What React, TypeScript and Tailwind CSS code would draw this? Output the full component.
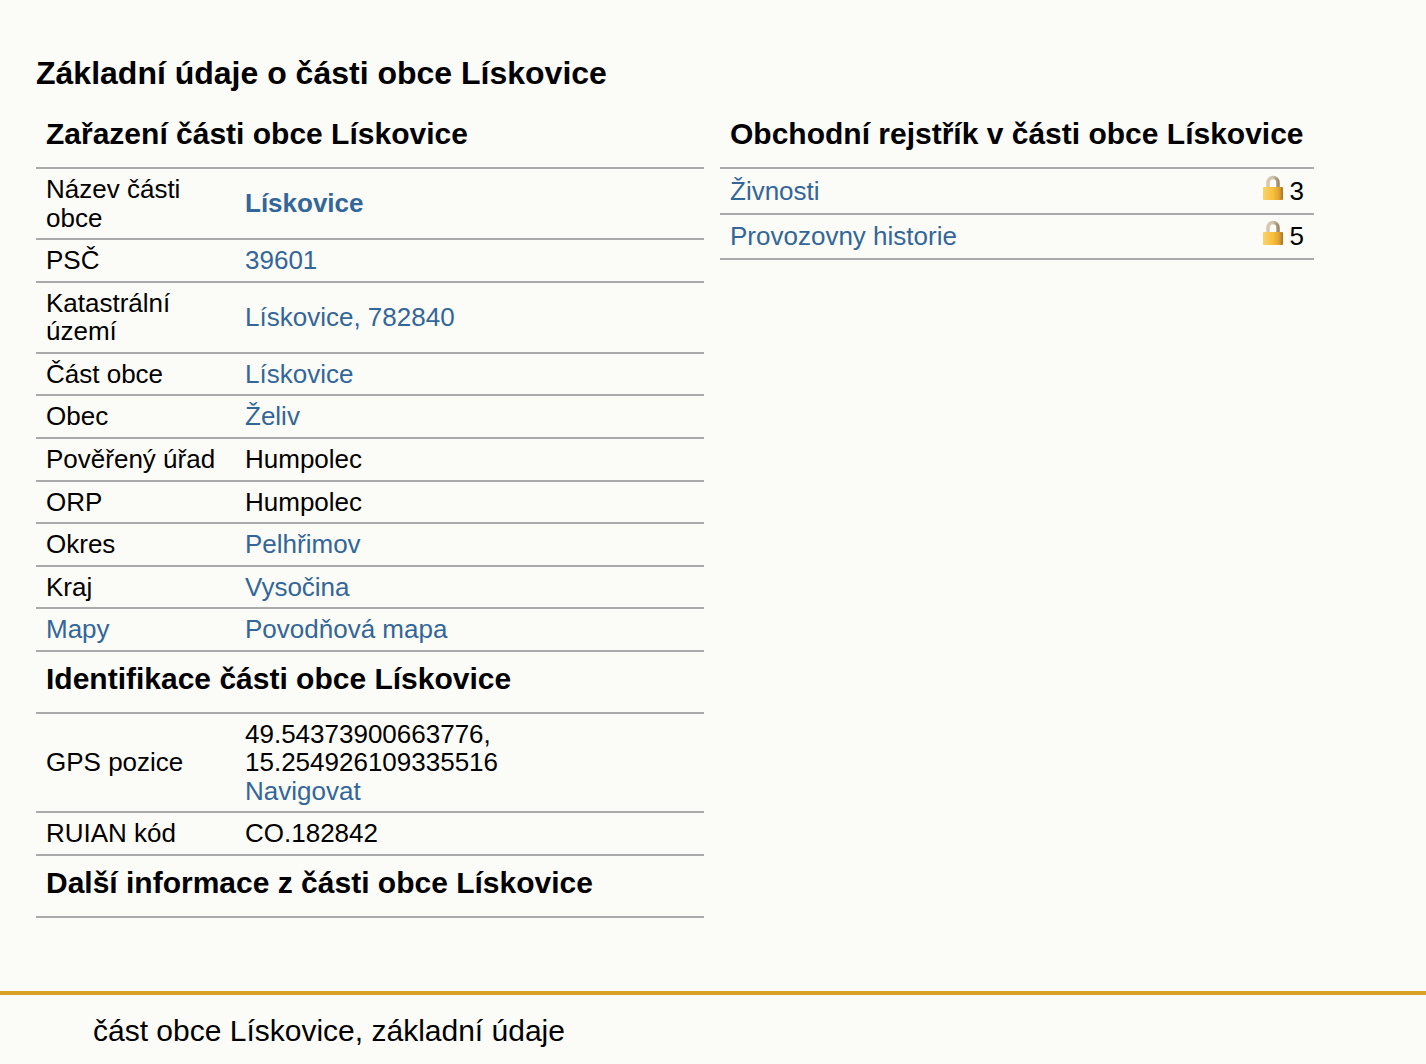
const font = "font-['Liberation_Sans',Arial,sans-serif]";

function A({ children, bold }: { children: React.ReactNode; bold?: boolean }) {
  return (
    <a href="#" className={`text-[#336699] ${bold ? 'font-bold' : ''}`}>
      {children}
    </a>
  );
}

function Lock() {
  return (
    <svg width="22" height="26" viewBox="0 0 22 26" className="mt-[-5px] mb-[1px] shrink-0">
      <defs>
        <linearGradient id="lockBody" x1="0" x2="1" y1="0" y2="0">
          <stop offset="0" stopColor="#f9d468" />
          <stop offset="0.5" stopColor="#f7bf3c" />
          <stop offset="0.8" stopColor="#e2a32f" />
          <stop offset="1" stopColor="#a87326" />
        </linearGradient>
        <linearGradient id="lockBow" x1="0" x2="1" y1="0" y2="0">
          <stop offset="0" stopColor="#d8c9ac" />
          <stop offset="0.5" stopColor="#cfc4b0" />
          <stop offset="1" stopColor="#a08a68" />
        </linearGradient>
      </defs>
      <path d="M6 13V7.5a5 5 0 0 1 10 0V13" fill="none" stroke="url(#lockBow)" strokeWidth="3.6" />
      <rect x="1" y="12" width="20" height="13" rx="1" fill="url(#lockBody)" />
    </svg>
  );
}

function Heading({ children, className }: { children: React.ReactNode; className?: string }) {
  return (
    <h3 className={`border-b-2 border-[#aaaaaa] px-[10px] text-[30px] font-bold leading-[33px] text-black ${className ?? ''}`}>
      {children}
    </h3>
  );
}

function InfoRow({ label, children }: { label: React.ReactNode; children: React.ReactNode }) {
  return (
    <div className="flex items-center border-b-2 border-[#aaaaaa] py-[6px]">
      <div className="w-[209px] shrink-0 px-[10px]">{label}</div>
      <div className="flex-1 pr-[200px]">{children}</div>
    </div>
  );
}

export default function App() {
  return (
    <div className={`${font} min-h-[1064px] bg-[#fbfbf7] text-[26px] leading-[28.57px] text-black`}>
      {/* obsah */}
      <div className="px-[36px] pt-[55px]">
        <h2 className="text-[32px] font-bold leading-[37px]">Základní údaje o části obce Lískovice</h2>

        <div className="mt-[17px] flex items-start gap-[16px]">
          <div className="w-[668px]">
            <Heading className="pt-[8px] pb-[17px]">Zařazení části obce Lískovice</Heading>
            <InfoRow label="Název části obce"><A bold>Lískovice</A></InfoRow>
            <InfoRow label="PSČ"><A>39601</A></InfoRow>
            <InfoRow label="Katastrální území"><A>Lískovice, 782840</A></InfoRow>
            <InfoRow label="Část obce"><A>Lískovice</A></InfoRow>
            <InfoRow label="Obec"><A>Želiv</A></InfoRow>
            <InfoRow label="Pověřený úřad">Humpolec</InfoRow>
            <InfoRow label="ORP">Humpolec</InfoRow>
            <InfoRow label="Okres"><A>Pelhřimov</A></InfoRow>
            <InfoRow label="Kraj"><A>Vysočina</A></InfoRow>
            <InfoRow label={<A>Mapy</A>}><A>Povodňová mapa</A></InfoRow>
            <Heading className="pt-[10px] pb-[17px]">Identifikace části obce Lískovice</Heading>
            <InfoRow label="GPS pozice">
              49.54373900663776, 15.254926109335516
              <br />
              <A>Navigovat</A>
            </InfoRow>
            <InfoRow label="RUIAN kód">CO.182842</InfoRow>
            <Heading className="pt-[10px] pb-[17px]">Další informace z části obce Lískovice</Heading>
          </div>

          <div className="w-[594px]">
            <Heading className="pt-[8px] pb-[17px]">Obchodní rejstřík v části obce Lískovice</Heading>
            {[
              ['Živnosti', '3'],
              ['Provozovny historie', '5'],
            ].map(([name, count]) => (
              <div key={name} className="flex items-center justify-between border-b-2 border-[#aaaaaa] px-[10px] py-[7.5px]">
                <A>{name}</A>
                <span className="flex items-center gap-[6px]">
                  <Lock />
                  {count}
                </span>
              </div>
            ))}
          </div>
        </div>
      </div>

      {/* paticka */}
      <div className="mt-[73px] border-t-4 border-[#d8a324] pl-[93px] pt-[19px] text-[30px] leading-[34px]">
        část obce Lískovice, základní údaje
      </div>
    </div>
  );
}
